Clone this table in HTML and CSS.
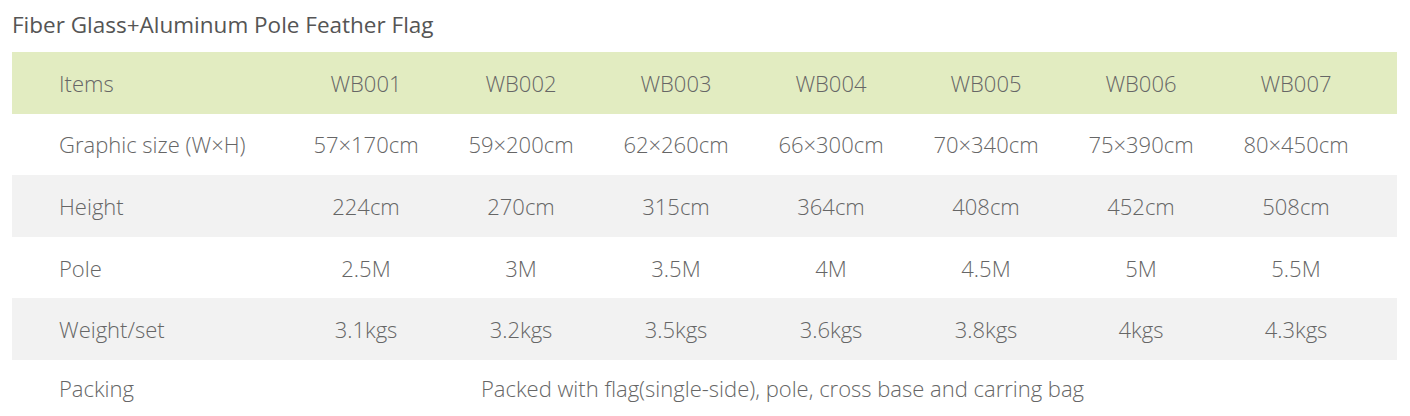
FILE: index.html
```html
<!DOCTYPE html>
<html>
<head>
<meta charset="utf-8">
<link rel="stylesheet" href="styles.css">
</head>
<body>
<h1 class="title">Fiber Glass+Aluminum Pole Feather Flag</h1>
<div class="spec">
  <div class="row head">
    <div class="label">Items</div>
    <div class="cell">WB001</div><div class="cell">WB002</div><div class="cell">WB003</div><div class="cell">WB004</div><div class="cell">WB005</div><div class="cell">WB006</div><div class="cell">WB007</div>
  </div>
  <div class="row">
    <div class="label">Graphic size (W×H)</div>
    <div class="cell">57×170cm</div><div class="cell">59×200cm</div><div class="cell">62×260cm</div><div class="cell">66×300cm</div><div class="cell">70×340cm</div><div class="cell">75×390cm</div><div class="cell">80×450cm</div>
  </div>
  <div class="row alt">
    <div class="label">Height</div>
    <div class="cell">224cm</div><div class="cell">270cm</div><div class="cell">315cm</div><div class="cell">364cm</div><div class="cell">408cm</div><div class="cell">452cm</div><div class="cell">508cm</div>
  </div>
  <div class="row">
    <div class="label">Pole</div>
    <div class="cell">2.5M</div><div class="cell">3M</div><div class="cell">3.5M</div><div class="cell">4M</div><div class="cell">4.5M</div><div class="cell">5M</div><div class="cell">5.5M</div>
  </div>
  <div class="row alt">
    <div class="label">Weight/set</div>
    <div class="cell">3.1kgs</div><div class="cell">3.2kgs</div><div class="cell">3.5kgs</div><div class="cell">3.6kgs</div><div class="cell">3.8kgs</div><div class="cell">4kgs</div><div class="cell">4.3kgs</div>
  </div>
  <div class="row last">
    <div class="label">Packing</div>
    <div class="wide">Packed with flag(single-side), pole, cross base and carring bag</div>
  </div>
</div>
</body>
</html>
```
FILE: styles.css
```css
html, body {
  margin: 0;
  padding: 0;
  background: #ffffff;
}
body {
  font-family: "Open Sans", "Liberation Sans", sans-serif;
  color: #666666;
}
.title {
  margin: 0;
  padding: 10px 0 0 12px;
  height: 52px;
  box-sizing: border-box;
  font-size: 22.5px;
  font-weight: 400;
  color: #555555;
  line-height: 30px;
}
.spec {
  margin: 0 13px 0 12px;
}
.row {
  display: grid;
  grid-template-columns: 276.5px repeat(7, 155px) 1fr;
  align-items: center;
  height: 61.6px;
  font-size: 22px;
  font-weight: 300;
  color: #666666;
}
.row.head {
  background: #e2ecc1;
}
.row.alt {
  background: #f2f2f2;
}
.row.last {
  grid-template-columns: 276.5px 988px 1fr;
  height: 56px;
}
.label {
  padding-left: 47px;
  white-space: nowrap;
}
.cell, .wide {
  text-align: center;
  white-space: nowrap;
}
```
